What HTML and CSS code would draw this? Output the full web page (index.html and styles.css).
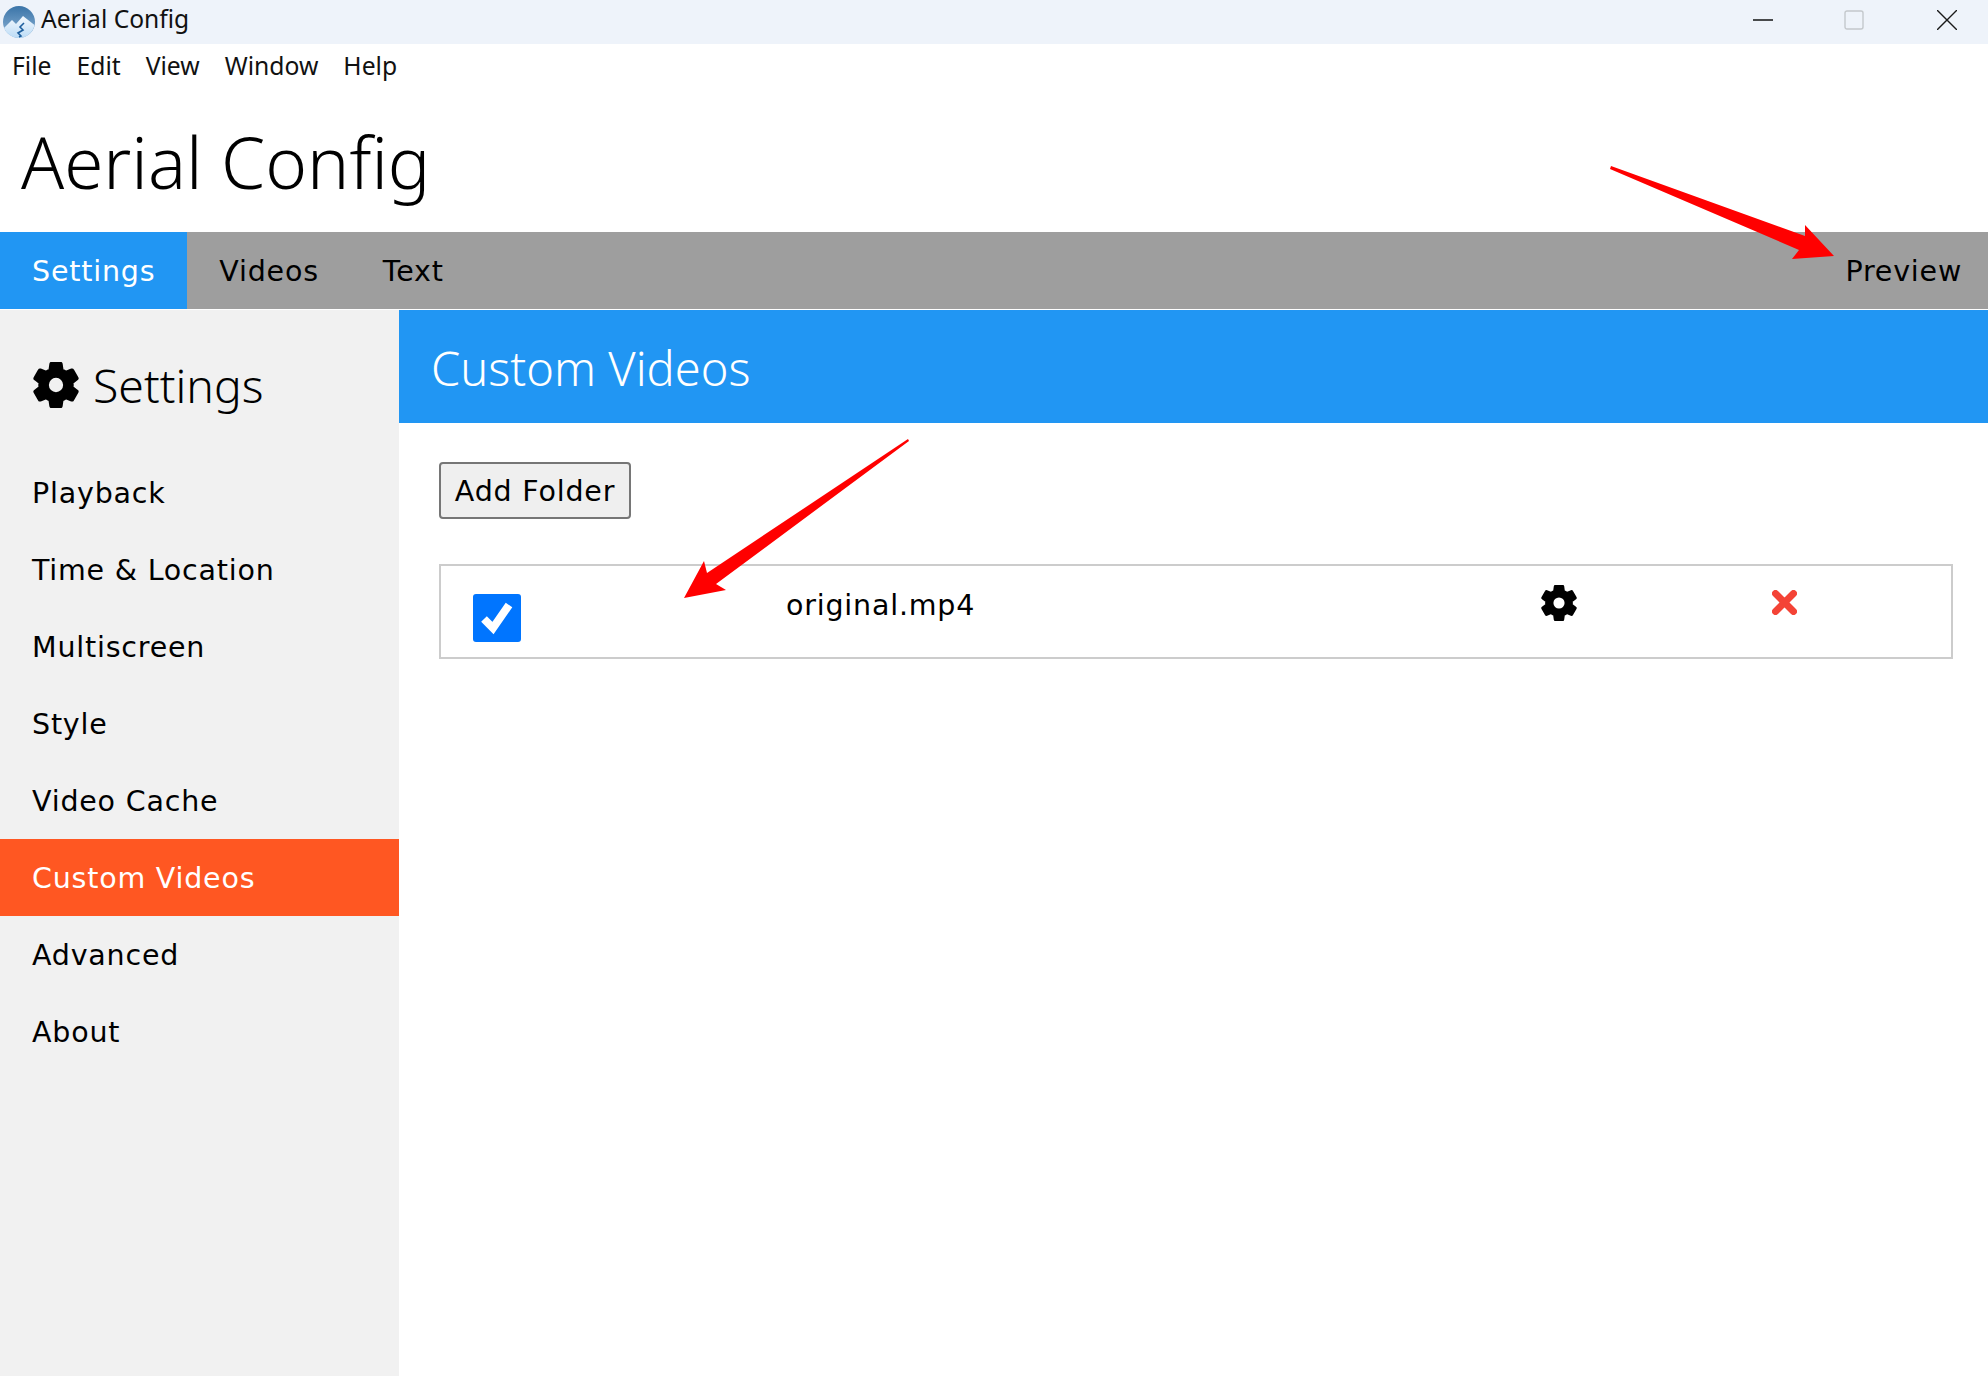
FILE: index.html
```html
<!DOCTYPE html>
<html lang="en">
<head>
  <meta charset="UTF-8">
  <title>Aerial Config</title>
  <link rel="stylesheet" href="styles.css">
</head>
<body>
  <svg width="0" height="0" class="defs">
    <defs>
      <path id="gear" d="M19.14,12.94c0.04-0.3,0.06-0.61,0.06-0.94c0-0.32-0.02-0.64-0.07-0.94l2.03-1.58c0.18-0.14,0.23-0.41,0.12-0.61l-1.92-3.32c-0.12-0.22-0.37-0.29-0.59-0.22l-2.39,0.96c-0.5-0.38-1.03-0.7-1.62-0.94L14.4,2.81c-0.04-0.24-0.24-0.41-0.48-0.41h-3.84c-0.24,0-0.43,0.17-0.47,0.41L9.25,5.35C8.66,5.59,8.12,5.92,7.63,6.29L5.24,5.33c-0.22-0.08-0.47,0-0.59,0.22L2.74,8.87C2.62,9.08,2.66,9.34,2.86,9.48l2.03,1.58C4.84,11.36,4.8,11.69,4.8,12s0.02,0.64,0.07,0.94l-2.03,1.58c-0.18,0.14-0.23,0.41-0.12,0.61l1.92,3.32c0.12,0.22,0.37,0.29,0.59,0.22l2.39-0.96c0.5,0.38,1.03,0.7,1.62,0.94l0.36,2.54c0.05,0.24,0.24,0.41,0.48,0.41h3.84c0.24,0,0.44-0.17,0.47-0.41l0.36-2.54c0.59-0.24,1.13-0.56,1.62-0.94l2.39,0.96c0.22,0.08,0.47,0,0.59-0.22l1.92-3.32c0.12-0.22,0.07-0.47-0.12-0.61L19.14,12.94z M12,15.6c-1.98,0-3.6-1.62-3.6-3.6s1.62-3.6,3.6-3.6s3.6,1.62,3.6,3.6S13.98,15.6,12,15.6z"/>
      <linearGradient id="sky" x1="0" y1="0" x2="0" y2="1">
        <stop offset="0" stop-color="#3a74a8"/>
        <stop offset="0.6" stop-color="#6d9bc4"/>
        <stop offset="1" stop-color="#8fb6d8"/>
      </linearGradient>
      <linearGradient id="snow" x1="0" y1="0" x2="0" y2="1">
        <stop offset="0" stop-color="#f4f9fe"/>
        <stop offset="1" stop-color="#bcdcf6"/>
      </linearGradient>
    </defs>
  </svg>

  <div class="titlebar">
    <svg class="app-logo" viewBox="0 0 32 32">
      <circle cx="16" cy="16" r="16" fill="url(#sky)"/>
      <path d="M1 22 L9 14 L13 18 L20 10 L31.5 19 A16 16 0 0 1 16 32 A16 16 0 0 1 1 22Z" fill="url(#snow)"/>
      <path d="M21 17 L17 21 L20 24 L15 27 L18 30 L16 31" fill="none" stroke="#1d5f9e" stroke-width="1.6"/>
    </svg>
    <span class="app-name">Aerial Config</span>
    <div class="win-buttons">
      <svg class="win-btn" viewBox="0 0 20 20"><path d="M0 10H20" stroke="#000" stroke-width="1.4"/></svg>
      <svg class="win-btn max" viewBox="0 0 20 20"><rect x="1" y="1" width="18" height="18" rx="2" fill="none" stroke="#c4c8cc" stroke-width="1.4"/></svg>
      <svg class="win-btn" viewBox="0 0 20 20"><path d="M0 0L20 20M20 0L0 20" stroke="#1a1a1a" stroke-width="1.4"/></svg>
    </div>
  </div>

  <nav class="menubar">
    <span>File</span>
    <span>Edit</span>
    <span>View</span>
    <span>Window</span>
    <span>Help</span>
  </nav>

  <h1 class="page-title">Aerial Config</h1>

  <div class="tabs">
    <a class="tab active">Settings</a>
    <a class="tab">Videos</a>
    <a class="tab">Text</a>
    <a class="tab preview">Preview</a>
  </div>

  <div class="main">
    <aside class="sidebar">
      <h2 class="side-title">
        <svg class="side-gear" viewBox="2 2 20 20"><use href="#gear" stroke="#000" stroke-width="1"/></svg>
        Settings
      </h2>
      <a class="side-item">Playback</a>
      <a class="side-item">Time &amp; Location</a>
      <a class="side-item">Multiscreen</a>
      <a class="side-item">Style</a>
      <a class="side-item">Video Cache</a>
      <a class="side-item current">Custom Videos</a>
      <a class="side-item">Advanced</a>
      <a class="side-item">About</a>
    </aside>

    <section class="content">
      <header class="content-head">Custom Videos</header>
      <div class="content-body">
        <button class="add-btn">Add Folder</button>
        <div class="video-row">
          <span class="check">
            <svg viewBox="0 0 48 48"><path d="M11 25L20 34L36 11" fill="none" stroke="#fff" stroke-width="8"/></svg>
          </span>
          <span class="video-name">original.mp4</span>
          <svg class="row-gear" viewBox="2 2 20 20"><use href="#gear" stroke="#000" stroke-width="1"/></svg>
          <svg class="row-x" viewBox="0 0 25 25"><path d="M3.5 3.5L21.5 21.5M21.5 3.5L3.5 21.5" stroke="#f44336" stroke-width="7" stroke-linecap="round"/></svg>
        </div>
      </div>
    </section>
  </div>

  <!-- red annotation arrows drawn on top of the screenshot -->
  <svg class="arrow-layer" viewBox="0 0 1988 1376">
    <polygon fill="#ff0000" points="1611,166 1805,236 1805,225 1834,256 1792,259 1799,250 1610,169"/>
    <polygon fill="#ff0000" points="908,439 909,441 716,584 726,590 684,598 704,561 707,573"/>
  </svg>
</body>
</html>
```

FILE: styles.css
```css
* { box-sizing: border-box; margin: 0; padding: 0; }

body {
  position: relative;
  width: 1988px;
  height: 1376px;
  overflow: hidden;
  display: flex;
  flex-direction: column;
  background: #fff;
  color: #000;
  font-family: "DejaVu Sans", sans-serif;
  font-size: 28.5px;
  letter-spacing: 0.8px;
}

.defs { position: absolute; }

.titlebar {
  height: 44px;
  flex: none;
  display: flex;
  align-items: center;
  background: #eef3fa;
  padding-left: 3px;
}

.app-logo { width: 32px; height: 32px; margin-right: 6px; }

.app-name {
  font-family: "Noto Sans", sans-serif;
  font-size: 24.6px;
  letter-spacing: 0;
  color: #111;
  padding-bottom: 7px;
}

.win-buttons {
  margin-left: auto;
  display: flex;
  gap: 71px;
  padding: 0 31px 4px 0;
}

.win-btn { width: 20px; height: 20px; }
.win-btn.max { margin-right: 2px; }

.menubar {
  height: 44px;
  flex: none;
  display: flex;
  align-items: center;
  gap: 25px;
  padding: 0 0 2px 12px;
  font-family: "Noto Sans", sans-serif;
  font-size: 24.7px;
  letter-spacing: 0;
  color: #111;
}

.page-title {
  height: 144px;
  flex: none;
  padding: 30px 0 0 21px;
  font-family: "Noto Sans", sans-serif;
  font-weight: 300;
  font-size: 71px;
  letter-spacing: 0;
  line-height: 88px;
}

.tabs {
  height: 77px;
  flex: none;
  display: flex;
  background: #9e9e9e;
}

.tab {
  display: flex;
  align-items: center;
  padding: 2px 32px 0;
}

.tab.active { background: #2196f3; color: #fff; }

.tab.preview { margin-left: auto; padding-right: 26px; }

.main {
  flex: 1;
  display: flex;
  min-height: 0;
  padding-top: 1px;
}

.sidebar {
  width: 399px;
  flex: none;
  background: #f1f1f1;
  display: flex;
  flex-direction: column;
}

.side-title {
  height: 144px;
  display: flex;
  align-items: center;
  gap: 14px;
  padding: 5px 0 0 33px;
  font-family: "Noto Sans", sans-serif;
  font-weight: 300;
  font-size: 46.4px;
  letter-spacing: 0;
}

.side-gear { width: 46px; height: 46px; }

.side-item {
  height: 77px;
  flex: none;
  display: flex;
  align-items: center;
  padding: 2px 0 0 32px;
}

.side-item.current { background: #ff5722; color: #fff; }

.content { flex: 1; display: flex; flex-direction: column; }

.content-head {
  height: 113px;
  flex: none;
  display: flex;
  align-items: center;
  padding: 2px 0 0 32px;
  background: #2196f3;
  color: #fff;
  font-family: "Noto Sans", sans-serif;
  font-weight: 300;
  font-size: 47px;
  letter-spacing: 0;
}

.content-body { padding: 39px 35px 0 40px; }

.add-btn {
  display: block;
  width: 192px;
  height: 57px;
  padding-top: 2px;
  border: 2px solid #767676;
  border-radius: 4px;
  background: #efefef;
  color: #000;
  font-family: "DejaVu Sans", sans-serif;
  font-size: 28.5px;
  letter-spacing: 0.8px;
}

.video-row {
  position: relative;
  height: 95px;
  margin-top: 45px;
  border: 2px solid #ccc;
  display: flex;
  align-items: flex-start;
}

.check {
  width: 48px;
  height: 48px;
  margin: 28px 0 0 32px;
  border-radius: 3px;
  background: #0075ff;
  display: block;
}

.check svg { display: block; }

.video-name { margin: 23px 0 0 265px; }

.row-gear { width: 36px; height: 36px; margin: 19px 0 0 566px; }

.row-x { width: 25px; height: 25px; margin: 24px 0 0 195px; }

.arrow-layer {
  position: absolute;
  left: 0;
  top: 0;
  width: 1988px;
  height: 1376px;
  pointer-events: none;
}
```
